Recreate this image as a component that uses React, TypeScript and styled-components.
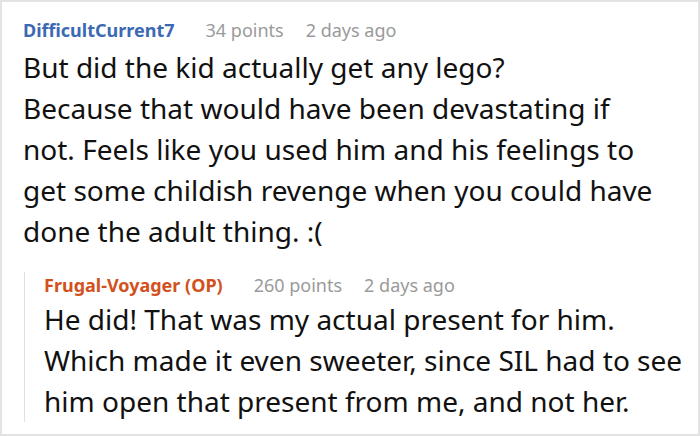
import styled, { createGlobalStyle } from "styled-components";

const GlobalStyle = createGlobalStyle`
  html, body {
    margin: 0;
    padding: 0;
    background: #ffffff;
  }
  body {
    font-family: "Noto Sans", "Open Sans", sans-serif;
    color: #111111;
  }
`;

const Frame = styled.div`
  box-sizing: border-box;
  width: 700px;
  height: 436px;
  border: 2px solid #e3e3e3;
  padding: 15px 0 0 21px;
  overflow: hidden;
`;

const Comment = styled.div`
  display: flex;
  flex-direction: column;
`;

const Reply = styled.div`
  display: flex;
  flex-direction: column;
  margin-top: 20px;
  margin-left: 1px;
  padding-left: 19px;
  border-left: 1px solid #e0e0e0;
`;

const Meta = styled.div`
  display: flex;
  align-items: baseline;
  font-size: 18px;
  line-height: 26px;
  white-space: nowrap;
`;

const Author = styled.span<{ $op?: boolean }>`
  font-weight: 700;
  color: ${(p) => (p.$op ? "#d2511d" : "#3b69b3")};
  margin-right: 31px;
`;

const Info = styled.span`
  color: #9a9a9a;
  margin-right: 22px;
`;

const Body = styled.p<{ $tight?: boolean }>`
  margin: ${(p) => (p.$tight ? "1px 0 0" : "4px 0 0")};
  font-size: 28px;
  line-height: 41px;
  white-space: nowrap;
`;

export default function App() {
  return (
    <>
      <GlobalStyle />
      <Frame>
        <Comment>
          <Meta>
            <Author>DifficultCurrent7</Author>
            <Info>34 points</Info>
            <Info>2 days ago</Info>
          </Meta>
          <Body>
            But did the kid actually get any lego?
            <br />
            Because that would have been devastating if
            <br />
            not. Feels like you used him and his feelings to
            <br />
            get some childish revenge when you could have
            <br />
            done the adult thing. :(
          </Body>
        </Comment>
        <Reply>
          <Meta>
            <Author $op>Frugal-Voyager (OP)</Author>
            <Info>260 points</Info>
            <Info>2 days ago</Info>
          </Meta>
          <Body $tight>
            He did! That was my actual present for him.
            <br />
            Which made it even sweeter, since SIL had to see
            <br />
            him open that present from me, and not her.
          </Body>
        </Reply>
      </Frame>
    </>
  );
}
